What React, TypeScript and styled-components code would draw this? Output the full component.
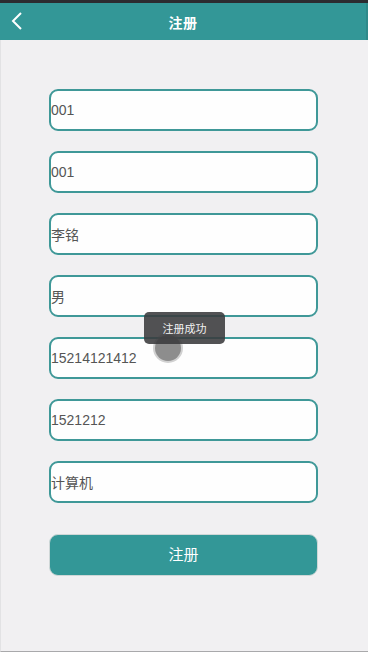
import React from "react";
import styled, { createGlobalStyle } from "styled-components";

const Global = createGlobalStyle`
  html, body { margin: 0; padding: 0; }
  body {
    width: 368px; height: 652px; overflow: hidden;
    background: #f1f0f2;
    font-family: "Noto Sans CJK SC", "Liberation Sans", sans-serif;
  }
`;

const Screen = styled.div`
  position: relative;
  width: 368px;
  height: 652px;
  box-sizing: border-box;
  background: #f1f0f2;
  border-left: 1px solid #e2e2e4;
  border-bottom: 1px solid #a9a9ab;
  display: flex;
  flex-direction: column;
`;

const StatusStrip = styled.div`
  height: 3px;
  background: #2c2c30;
  margin-left: -1px;
`;

const Header = styled.header`
  height: 37px;
  background: #339797;
  display: flex;
  align-items: center;
  justify-content: center;
  position: relative;
  margin-left: -1px;
  border-right: 2px solid #2f8a8a;
`;

const BackBtn = styled.span`
  position: absolute;
  left: 10px;
  top: 8px;
  display: flex;
`;

const Title = styled.h1`
  margin: 0;
  font-size: 14px;
  font-weight: 700;
  color: #ffffff;
  letter-spacing: 0.5px;
`;

const Form = styled.div`
  display: flex;
  flex-direction: column;
  gap: 20px;
  padding: 49px 0 0 48px;
`;

const Field = styled.div`
  width: 269px;
  height: 42px;
  box-sizing: border-box;
  border: 2px solid #3f9898;
  border-radius: 9px;
  background: #fefefe;
  display: flex;
  align-items: center;
  padding: 0 0 1px 0;
  font-size: 14px;
  color: #555555;
  font-family: "Liberation Sans", "Noto Sans CJK SC", sans-serif;
`;

const SubmitBtn = styled.div`
  margin-top: 11px;
  width: 269px;
  height: 42px;
  box-sizing: border-box;
  background: #339797;
  border: 1px solid #cfd7d7;
  border-radius: 9px;
  display: flex;
  align-items: center;
  justify-content: center;
  padding-bottom: 3px;
  color: #ffffff;
  font-size: 15px;
`;

const Toast = styled.div`
  position: absolute;
  left: 143px;
  top: 312px;
  width: 81px;
  height: 32px;
  border-radius: 5px;
  background: rgba(58, 58, 60, 0.88);
  color: #f2f2f2;
  font-size: 11px;
  display: flex;
  align-items: center;
  justify-content: center;
`;

const Touch = styled.div`
  position: absolute;
  left: 154px;
  top: 335px;
  width: 26px;
  height: 26px;
  border-radius: 50%;
  background: #7a7a7a;
  box-shadow: 0 0 0 2px rgba(150,150,150,0.5);
  opacity: 0.85;
`;

const values = ["001", "001", "李铭", "男", "15214121412", "1521212", "计算机"];

export default function App() {
  return (
    <>
      <Global />
      <Screen>
        <StatusStrip />
        <Header>
          <BackBtn>
            <svg width="14" height="20" viewBox="0 0 14 20">
              <path d="M11 2 L3 10 L11 18" fill="none" stroke="#ffffff" strokeWidth="2" />
            </svg>
          </BackBtn>
          <Title>注册</Title>
        </Header>
        <Form>
          {values.map((v, i) => (
            <Field key={i}>{v}</Field>
          ))}
          <SubmitBtn>注册</SubmitBtn>
        </Form>
        <Touch />
        <Toast>注册成功</Toast>
      </Screen>
    </>
  );
}
